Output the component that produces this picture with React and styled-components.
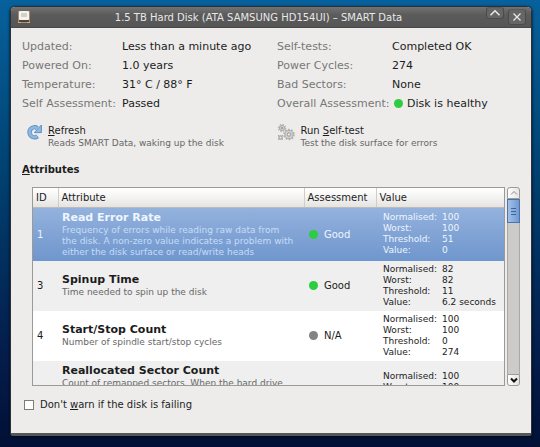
import React, { useState } from "react";
import styled, { createGlobalStyle } from "styled-components";

const health = [
  { label: "Updated:", value: "Less than a minute ago" },
  { label: "Self-tests:", value: "Completed OK" },
  { label: "Powered On:", value: "1.0 years" },
  { label: "Power Cycles:", value: "274" },
  { label: "Temperature:", value: "31° C / 88° F" },
  { label: "Bad Sectors:", value: "None" },
  { label: "Self Assessment:", value: "Passed" },
  { label: "Overall Assessment:", value: "Disk is healthy", dot: "#2ecc40" },
];

const attributes = [
  {
    id: 1,
    name: "Read Error Rate",
    about:
      "Frequency of errors while reading raw data from the disk. A non-zero value indicates a problem with either the disk surface or read/write heads",
    status: "Good",
    values: ["100", "100", "51", "0"],
  },
  {
    id: 3,
    name: "Spinup Time",
    about: "Time needed to spin up the disk",
    status: "Good",
    values: ["82", "82", "11", "6.2 seconds"],
  },
  {
    id: 4,
    name: "Start/Stop Count",
    about: "Number of spindle start/stop cycles",
    status: "N/A",
    values: ["100", "100", "0", "274"],
  },
  {
    id: 5,
    name: "Reallocated Sector Count",
    about:
      'Count of remapped sectors. When the hard drive finds a read/write/verification error, it marks the sector as "reallocated" and transfers data to a special reserved area (spare area)',
    status: "Good",
    values: ["100", "100", "36", "0 sectors"],
  },
];

const valueLabels = ["Normalised:", "Worst:", "Threshold:", "Value:"];

function DiskIcon() {
  return (
    <svg width="14" height="14" viewBox="0 0 14 14" aria-hidden="true">
      <rect x="1" y="1" width="12" height="12" rx="1" fill="#b08a68" />
      <rect x="2" y="1" width="10" height="9" rx="1" fill="#f6f4ee" />
      <rect x="4" y="3" width="6" height="4" fill="#cfd2cc" />
      <rect x="2" y="10" width="10" height="2" fill="#4b4641" />
      <path d="M1 12.5h3M10 12.5h3" stroke="#e7a873" />
    </svg>
  );
}

function RefreshIcon() {
  return (
    <svg width="16" height="16" viewBox="0 0 16 16" aria-hidden="true">
      <path
        d="M10.6 12.2A5 5 0 1 1 10.4 4.2"
        fill="none"
        stroke="#5f90c6"
        strokeWidth="4.4"
      />
      <path d="M14.4 1v7.6H7.4z" fill="#8fb8e2" stroke="#5f90c6" strokeLinejoin="round" />
      <path
        d="M10 12.4A4.9 4.9 0 1 1 10.8 4.6"
        fill="none"
        stroke="#8fb8e2"
        strokeWidth="2.8"
      />
    </svg>
  );
}

function GearsIcon() {
  return (
    <svg width="18" height="18" viewBox="0 0 18 18" fill="none" aria-hidden="true">
      <circle cx="5" cy="4" r="3.4" stroke="#b4b4b2" strokeWidth="1.6" strokeDasharray="1.5 1.17" />
      <circle cx="5" cy="4" r="2.6" fill="#d0d0ce" stroke="#acacaa" />
      <circle cx="5" cy="4" r="0.9" fill="#8f8f8d" />
      <circle cx="12" cy="10.5" r="5" stroke="#b0b0ae" strokeWidth="1.6" strokeDasharray="1.7 1.44" />
      <circle cx="12" cy="10.5" r="4.1" fill="#d0d0ce" stroke="#acacaa" />
      <circle cx="12" cy="10.5" r="1.7" fill="#eeeeec" stroke="#979795" />
      <circle cx="3.5" cy="13.5" r="1.9" fill="#c6c6c4" stroke="#a8a8a6" />
      <path d="M1 11l5 5M6 11l-5 5" stroke="#a8a8a6" />
      <circle cx="3.5" cy="13.5" r="0.7" fill="#eeeeec" />
    </svg>
  );
}

function Chevron({ down, size = 8 }) {
  return (
    <svg width={size} height={size} viewBox="0 0 8 8" fill="none" stroke="currentColor" aria-hidden="true">
      <path d={down ? "M1 2.5l3 3 3-3" : "M1 5.5l3-3 3 3"} strokeWidth={down ? 2 : 1} />
    </svg>
  );
}

function App() {
  const [selected, setSelected] = useState(1);

  return (
    <>
      <GlobalStyle />
      <Desktop>
        <Window>
          <TitleBar>
            <DiskIcon />
            <Title>1.5 TB Hard Disk (ATA SAMSUNG HD154UI) – SMART Data</Title>
            <WindowButton $short aria-label="Roll up">
              <Chevron size={12} />
            </WindowButton>
            <WindowButton aria-label="Close">
              <svg width="10" height="10" viewBox="0 0 10 10" stroke="currentColor" strokeWidth="1.3" aria-hidden="true">
                <path d="M1.5 1.5l7 7M8.5 1.5l-7 7" />
              </svg>
            </WindowButton>
          </TitleBar>

          <Content>
            <Summary>
              {health.map((item) => (
                <React.Fragment key={item.label}>
                  <dt>{item.label}</dt>
                  <dd>
                    {item.dot && <Dot $color={item.dot} />}
                    {item.value}
                  </dd>
                </React.Fragment>
              ))}
            </Summary>

            <Actions>
              <Action>
                <RefreshIcon />
                <span>
                  <u>R</u>efresh
                  <Hint>Reads SMART Data, waking up the disk</Hint>
                </span>
              </Action>
              <Action>
                <GearsIcon />
                <span>
                  Run <u>S</u>elf-test
                  <Hint>Test the disk surface for errors</Hint>
                </span>
              </Action>
            </Actions>

            <Heading>
              <u>A</u>ttributes
            </Heading>

            <ListArea>
              <ListFrame>
                <Table>
                  <colgroup>
                    <Col $width={25} />
                    <Col />
                    <Col $width={72} />
                    <Col $width={128} />
                  </colgroup>
                  <thead>
                    <tr>
                      <HeadCell>ID</HeadCell>
                      <HeadCell>Attribute</HeadCell>
                      <HeadCell>Assessment</HeadCell>
                      <HeadCell>Value</HeadCell>
                    </tr>
                  </thead>
                  <tbody>
                    {attributes.map((attr) => (
                      <Row
                        key={attr.id}
                        $selected={attr.id === selected}
                        onClick={() => setSelected(attr.id)}
                      >
                        <Cell>{attr.id}</Cell>
                        <Cell>
                          <Name>{attr.name}</Name>
                          <About>{attr.about}</About>
                        </Cell>
                        <Cell>
                          <Status>
                            <Dot $color={attr.status === "Good" ? "#2ecc40" : "#838383"} />
                            {attr.status}
                          </Status>
                        </Cell>
                        <Cell>
                          <Values>
                            {valueLabels.map((label, i) => (
                              <React.Fragment key={label}>
                                <dt>{label}</dt>
                                <dd>{attr.values[i]}</dd>
                              </React.Fragment>
                            ))}
                          </Values>
                        </Cell>
                      </Row>
                    ))}
                  </tbody>
                </Table>
              </ListFrame>
              <ScrollBar>
                <ScrollButton aria-label="Scroll up" $dim>
                  <Chevron />
                </ScrollButton>
                <Thumb />
                <Track />
                <ScrollButton aria-label="Scroll down">
                  <Chevron down />
                </ScrollButton>
              </ScrollBar>
            </ListArea>

            <WarnLabel>
              <CheckBox type="checkbox" />
              <span>
                Don't <u>w</u>arn if the disk is failing
              </span>
            </WarnLabel>
          </Content>
        </Window>
      </Desktop>
    </>
  );
}

const GlobalStyle = createGlobalStyle`
  * {
    box-sizing: border-box;
  }
  body {
    margin: 0;
    font-family: "DejaVu Sans", sans-serif;
    font-size: 10px;
    color: #1c1c1c;
  }
  button {
    font: inherit;
    color: inherit;
    padding: 0;
  }
  dl, dd, h2 {
    margin: 0;
  }
`;

const Desktop = styled.div`
  display: flex;
  height: 100vh;
  padding: 6px 8px 11px 10px;
  background: linear-gradient(#07619c, #00406f 40%, #04204f 75%, #021036);
`;

const Window = styled.main`
  flex: 1;
  min-width: 0;
  display: flex;
  flex-direction: column;
  background: #edeceb;
  border: 1px solid #2b3237;
  border-bottom: 3px solid #50585a;
  border-radius: 5px 5px 3px 3px;
  box-shadow: 0 1px 3px #000814;
  overflow: hidden;
`;

const TitleBar = styled.header`
  display: flex;
  align-items: center;
  gap: 4px;
  height: 21px;
  padding: 0 5px 0 6px;
  color: #e9e9e9;
  background: linear-gradient(#727272, #5b5b5b 40%, #555);
  border-bottom: 1px solid #484848;
`;

const Title = styled.div`
  flex: 1;
  text-align: center;
  white-space: nowrap;
`;

const WindowButton = styled.button`
  display: flex;
  align-items: center;
  justify-content: center;
  align-self: ${(props) => (props.$short ? "flex-start" : "center")};
  width: 18px;
  height: ${(props) => (props.$short ? "12px" : "16px")};
  background: #666;
  border: 1px solid #4b4b4b;
  border-top-color: #5b5b5b;
  border-radius: 3px;
`;

const Content = styled.div`
  flex: 1;
  min-height: 0;
  display: flex;
  flex-direction: column;
  padding: 9px 11px 21px;
`;

const Summary = styled.dl`
  display: grid;
  grid-template-columns: 100px 155fr 115px 128fr;
  line-height: 19px;
  font-size: 11px;
  white-space: nowrap;

  dt {
    color: #777;
  }

  dd {
    display: flex;
    align-items: center;
    gap: 4px;
  }
`;

const Dot = styled.i`
  flex: none;
  width: 9px;
  height: 9px;
  margin-left: 2px;
  border-radius: 50%;
  background: ${(props) => props.$color};
`;

const Actions = styled.div`
  display: grid;
  grid-template-columns: 253fr 245fr;
  margin-top: 11px;
  padding-left: 5px;
`;

const Action = styled.button`
  display: flex;
  align-items: flex-start;
  gap: 5px;
  border: 0;
  background: none;
  text-align: left;
  line-height: 14px;
`;

const Hint = styled.small`
  display: block;
  font-size: 9px;
  line-height: 11px;
  color: #666;
`;

const Heading = styled.h2`
  margin-top: 14px;
  font-size: 10px;
  line-height: 14px;
`;

const ListArea = styled.div`
  flex: 1;
  min-height: 0;
  display: flex;
  gap: 2px;
  margin: 10px 0 0 10px;
`;

const ListFrame = styled.div`
  flex: 1;
  min-width: 0;
  overflow: hidden;
  border: 1px solid #9c9a97;
  background: #fff;
`;

const Table = styled.table`
  width: 100%;
  table-layout: fixed;
  border-collapse: collapse;
`;

const Col = styled.col`
  width: ${(props) => (props.$width ? `${props.$width}px` : "auto")};
`;

const HeadCell = styled.th`
  height: 19px;
  padding: 0 3px;
  font-weight: normal;
  text-align: left;
  background: linear-gradient(#fff, #f3f3f2 50%, #e4e3e1);
  border-bottom: 1px solid #bdbbb8;

  & + & {
    border-left: 1px solid #cfcdca;
  }
`;

const Cell = styled.td`
  padding: 3px 4px;
`;

const Name = styled.div`
  font-size: 11px;
  font-weight: bold;
  line-height: 14px;
`;

const About = styled.div`
  padding-right: 6px;
  font-size: 9px;
  line-height: 11px;
  color: #686868;
`;

const Row = styled.tr`
  background: #fff;

  &:nth-child(even) {
    background: #efefef;
  }

  ${(props) =>
    props.$selected &&
    `
    && {
      color: #eef5ff;
      background: linear-gradient(#94b2dd, #6f96cd);
    }

    ${About} {
      color: #c6dcf8;
    }
  `}
`;

const Status = styled.div`
  display: flex;
  align-items: center;
  gap: 6px;
  margin-left: -1px;
`;

const Values = styled.dl`
  display: grid;
  grid-template-columns: 59px 1fr;
  margin-left: 3px;
  font-size: 9px;
  line-height: 11px;
  white-space: nowrap;
`;

const ScrollBar = styled.div`
  display: flex;
  flex-direction: column;
  width: 13px;
`;

const ScrollButton = styled.button`
  display: flex;
  align-items: center;
  justify-content: center;
  width: 100%;
  height: 12px;
  border: 1px solid #9c9a97;
  border-radius: ${(props) => (props.$dim ? "3px 3px 0 0" : "0 0 3px 3px")};
  background: linear-gradient(90deg, #fdfdfd, #e6e5e3);
  color: ${(props) => (props.$dim ? "#8d8b88" : "#111")};
`;

const Thumb = styled.div`
  height: 24px;
  border: 1px solid #4d72a8;
  background:
    repeating-linear-gradient(#3f6497 0 1px, transparent 1px 3px) center / 5px 7px no-repeat,
    linear-gradient(90deg, #a3c1ea, #7099d3);
`;

const Track = styled.div`
  flex: 1;
  border: solid #aaa8a5;
  border-width: 0 1px;
  background: #cdcbc9;
`;

const WarnLabel = styled.label`
  display: flex;
  align-items: center;
  align-self: flex-start;
  gap: 6px;
  margin: 12px 0 0 2px;
  line-height: 14px;
`;

const CheckBox = styled.input`
  appearance: none;
  width: 10px;
  height: 10px;
  margin: 0;
  border: 1px solid #7d7b78;
  background: #fff;

  &:checked {
    background: #6f96cd;
  }
`;

export default App;
